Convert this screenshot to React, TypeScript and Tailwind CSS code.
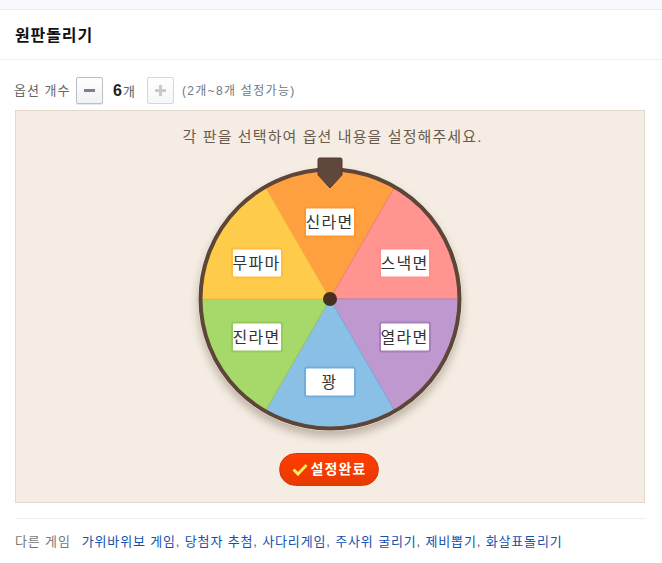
const FONT = "font-['Liberation_Sans','Noto_Sans_CJK_KR',sans-serif]";

type Slice = {
  label: string;
  fill: string;
  edge: string;
  ring: string;
  from: number;
  x: number;
  y: number;
};

const SIZE = 264;
const C = SIZE / 2;
const R = 129;

// angles are clockwise from 12 o'clock, x/y are the label centre from the wheel centre
const slices: Slice[] = [
  { label: "신라면", fill: "#ffa040", edge: "#f09030", ring: "#ff9630", from: -30, x: 0, y: -77 },
  { label: "스낵면", fill: "#ff9490", edge: "#f08078", ring: "#ff8f8a", from: 30, x: 75, y: -36 },
  { label: "열라면", fill: "#c098d0", edge: "#ac84bc", ring: "#a97fbd", from: 90, x: 75, y: 38 },
  { label: "꽝", fill: "#8abfe6", edge: "#78acd8", ring: "#72aedd", from: 150, x: 0, y: 83 },
  { label: "진라면", fill: "#a6d86a", edge: "#96c85c", ring: "#98c95e", from: 210, x: -73, y: 38 },
  { label: "무파마", fill: "#ffcb4a", edge: "#f0b83c", ring: "#ffbe3c", from: 270, x: -73, y: -36 },
];

function point(deg: number) {
  const a = (deg * Math.PI) / 180;
  return `${C + R * Math.sin(a)} ${C - R * Math.cos(a)}`;
}

function Wheel() {
  return (
    <div className="relative mr-[1px] mt-[19px] h-[264px] w-[264px] rounded-full shadow-[0_6px_9px_rgba(70,50,30,0.3)]">
      <svg width={SIZE} height={SIZE} viewBox={`0 0 ${SIZE} ${SIZE}`} className="block">
        {slices.map((s) => (
          <path
            key={s.label}
            d={`M${C} ${C} L${point(s.from)} A${R} ${R} 0 0 1 ${point(s.from + 60)} Z`}
            fill={s.fill}
            stroke={s.edge}
            strokeWidth="1"
          />
        ))}
        <circle cx={C} cy={C} r={R + 0.5} fill="none" stroke="#5d4538" strokeWidth="4" />
        <circle cx={C} cy={C} r="7" fill="#46301f" />
      </svg>

      {/* pointer */}
      <svg width="26" height="32" viewBox="0 0 26 32" className="absolute left-[119px] top-[-10px]">
        <path
          d="M2.5 1h21a1.5 1.5 0 0 1 1.5 1.5V18L13 31 1 18V2.5A1.5 1.5 0 0 1 2.5 1z"
          fill="#5f473b"
          stroke="#54392e"
        />
      </svg>

      {slices.map((s) => (
        <div
          key={s.label}
          className="absolute flex h-[31px] w-[52px] -translate-x-1/2 -translate-y-1/2 items-center justify-center whitespace-nowrap rounded-[3px] border-2 bg-white text-[16px] tracking-[1.2px] text-[#333]"
          style={{ left: C + s.x, top: C + s.y, borderColor: s.ring }}
        >
          {s.label}
        </div>
      ))}
    </div>
  );
}

const games = ["가위바위보 게임", "당첨자 추첨", "사다리게임", "주사위 굴리기", "제비뽑기", "화살표돌리기"];

export default function App() {
  return (
    <div className={`${FONT} h-[563px] w-[662px] overflow-hidden bg-white`}>
      <div className="h-[10px] border-b border-[#e8ebf0] bg-[#f7f9fc]" />
      <div className="flex h-[50px] items-center border-b border-[#eeeeee] px-[15px] pt-[2px]">
        <h1 className="text-[16px] font-bold tracking-[0.9px] text-[#111]">원판돌리기</h1>
      </div>

      <div className="w-[645px] pl-[15px]">
        <div className="mt-[17px] flex h-[27px] items-center text-[13px] text-[#666]">
          <span className="-ml-[1px] w-[62px] tracking-[1px]">옵션 개수</span>
          <button className="flex h-[27px] w-[27px] items-center justify-center rounded-[2px] border border-[#bbbfc6] bg-gradient-to-b from-white to-[#f0f1f3] shadow-[0_1px_1px_rgba(0,0,0,0.1)]">
            <span className="h-[3px] w-[11px] bg-[#7c828c]" />
          </button>
          <span className="ml-[10px] flex w-[34px] items-baseline">
            <b className="text-[16px] text-[#222]">6</b>
            <span className="ml-[1px] text-[#55606e]">개</span>
          </span>
          <button className="flex h-[27px] w-[27px] items-center justify-center rounded-[2px] border border-[#d4d6da] bg-gradient-to-b from-white to-[#f5f6f7] text-[#c5cad3]">
            <svg width="11" height="11" viewBox="0 0 11 11" fill="currentColor">
              <path d="M4 0h3v4h4v3H7v4H4V7H0V4h4z" />
            </svg>
          </button>
          <span className="ml-[8px] whitespace-nowrap text-[12px] tracking-[1.3px] text-[#6f7885]">(2개~8개 설정가능)</span>
        </div>

        <div className="mt-[6px] flex h-[393px] flex-col items-center border border-[#e2d8cc] bg-[#f5ede3]">
          <p className="ml-[5px] mt-[15px] h-[22px] whitespace-nowrap text-[15px] leading-[22px] tracking-[1.1px] text-[#6b5b4f]">
            각 판을 선택하여 옵션 내용을 설정해주세요.
          </p>
          <Wheel />
          <button className="mr-[2px] mt-[22px] flex h-[33px] w-[100px] items-center justify-center gap-[3px] rounded-full border border-[#cf3a10] bg-gradient-to-b from-[#ff3d00] to-[#e83a00] text-[14px] font-bold tracking-[1.1px] text-white">
            <svg width="16" height="13" viewBox="0 0 16 13" fill="none" stroke="#ffe95c" strokeWidth="3">
              <path d="M1.5 6.5l4.5 4.5L14.5 2" />
            </svg>
            설정완료
          </button>
        </div>

        <div className="mt-[15px] whitespace-nowrap border-t border-[#eeeeee] pt-[13px] text-[13px] leading-[20px] tracking-[0.85px] text-[#777]">
          <span className="mr-[11px]">다른 게임</span>
          {games.map((g, i) => (
            <span key={g}>
              <a className="text-[#1450b0]">{g}</a>
              {i < games.length - 1 && <span className="text-[#555]">, </span>}
            </span>
          ))}
        </div>
      </div>
    </div>
  );
}
